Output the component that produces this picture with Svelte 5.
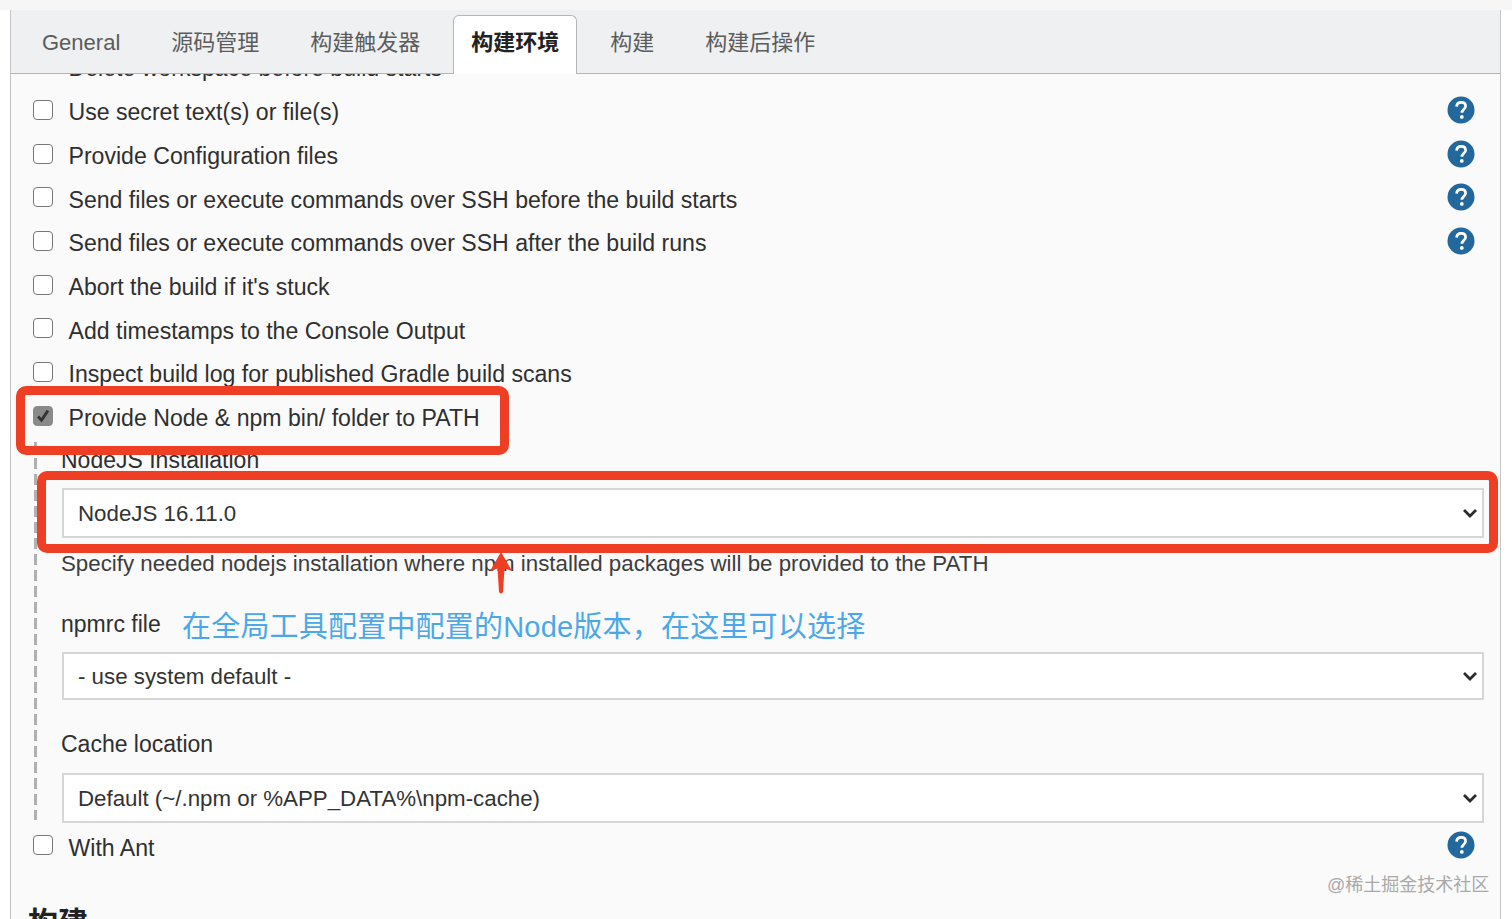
<script>
  const tabs = [
    { label: 'General' },
    { label: '源码管理' },
    { label: '构建触发器' },
    { label: '构建环境', active: true },
    { label: '构建' },
    { label: '构建后操作' }
  ];

  const rows = [
    { label: 'Use secret text(s) or file(s)', help: true },
    { label: 'Provide Configuration files', help: true },
    { label: 'Send files or execute commands over SSH before the build starts', help: true },
    { label: 'Send files or execute commands over SSH after the build runs', help: true },
    { label: "Abort the build if it's stuck" },
    { label: 'Add timestamps to the Console Output' },
    { label: 'Inspect build log for published Gradle build scans' }
  ];
</script>

{#snippet helpIcon()}
  <svg class="help" viewBox="0 0 28 28" aria-hidden="true">
    <circle cx="14" cy="14" r="13.5" fill="#22689c" />
    <path d="M9.6 10.6c.2-2.7 2-4.2 4.6-4.2 2.6 0 4.4 1.5 4.4 3.8 0 3.3-3.7 3.4-3.7 6.5" fill="none" stroke="#fff" stroke-width="2.7" />
    <circle cx="14.8" cy="20.9" r="1.9" fill="#fff" />
  </svg>
{/snippet}

{#snippet dropdown(value)}
  <div class="select">
    <select>
      <option>{value}</option>
    </select>
    <svg class="chevron" viewBox="0 0 16 10" aria-hidden="true">
      <path d="M2 2l6 6 6-6" fill="none" stroke="#2b2b2b" stroke-width="2.8" />
    </svg>
  </div>
{/snippet}

<div class="page">
  <div class="panel">
    <nav class="tabs">
      {#each tabs as tab}
        <button class="tab" class:active={tab.active}>{tab.label}</button>
      {/each}
    </nav>

    <div class="form">
      <div class="row clipped">
        <span class="box"></span>
        <span class="label">Delete workspace before build starts</span>
      </div>

      {#each rows as row}
        <div class="row">
          <span class="box"></span>
          <span class="label">{row.label}</span>
          {#if row.help}{@render helpIcon()}{/if}
        </div>
      {/each}

      <div class="row">
        <span class="box checked">
          <svg viewBox="0 0 20 20" aria-hidden="true">
            <path d="M4.5 10.5l3.8 4.2L15.5 4" fill="none" stroke="#333" stroke-width="3.2" />
          </svg>
        </span>
        <span class="label">Provide Node &amp; npm bin/ folder to PATH</span>
      </div>

      <div class="nested">
        <div class="field first">
          <div class="field-label">NodeJS Installation</div>
          {@render dropdown('NodeJS 16.11.0')}
          <div class="hint">Specify needed nodejs installation where npm installed packages will be provided to the PATH</div>
        </div>
        <div class="field second">
          <div class="field-label">npmrc file</div>
          {@render dropdown('- use system default -')}
        </div>
        <div class="field third">
          <div class="field-label">Cache location</div>
          {@render dropdown('Default (~/.npm or %APP_DATA%\\npm-cache)')}
        </div>
      </div>

      <div class="row">
        <span class="box"></span>
        <span class="label">With Ant</span>
        {@render helpIcon()}
      </div>

      <h2>构建</h2>
    </div>
  </div>

  <!-- annotations painted over the screenshot -->
  <div class="mark mark-check"></div>
  <div class="mark mark-select"></div>
  <svg class="arrow" viewBox="0 0 24 42" aria-hidden="true">
    <path d="M12 0L23 19 15.5 16.5 14 40Q12 43 10 40L8.5 16.5 1 19Z" fill="#ee3f24" />
  </svg>
  <div class="note">在全局工具配置中配置的Node版本，在这里可以选择</div>
  <div class="watermark">@稀土掘金技术社区</div>
</div>

<style>
  :global(body) {
    margin: 0;
    background: #fff;
  }

  .page {
    position: relative;
    height: 919px;
    overflow: hidden;
    box-sizing: border-box;
    padding: 10px 11px 0 10px;
    background: linear-gradient(#f6f6f6 10px, #fff 10px);
    font-family: 'Liberation Sans', 'Noto Sans CJK SC', sans-serif;
    color: #2f2f2f;
  }

  .panel {
    height: 100%;
    background: #fafafa;
    border-left: 1px solid #c4c4c4;
    border-right: 1px solid #c4c4c4;
    overflow: hidden;
    display: flex;
    flex-direction: column;
  }

  .tabs {
    position: relative;
    z-index: 2;
    flex: none;
    height: 64px;
    box-sizing: border-box;
    display: flex;
    align-items: flex-end;
    gap: 15px;
    padding-left: 13px;
    background: #eef0f2;
    border-bottom: 1px solid #b5b5b5;
  }

  .tab {
    height: 59px;
    margin-bottom: -1px;
    padding: 0 17px 4px;
    border: 1px solid transparent;
    border-bottom: none;
    border-radius: 6px 6px 0 0;
    background: none;
    font: 22px/30px 'Liberation Sans', 'Noto Sans CJK SC', sans-serif;
    color: #5c5c5c;
  }

  .tab.active {
    background: #fff;
    border-color: #b5b5b5;
    color: #222;
    font-weight: 700;
  }

  .form {
    flex: 1;
    padding: 0 15px 0 22px;
  }

  .row {
    display: flex;
    align-items: center;
    height: 43.7px;
    font-size: 23.1px;
  }

  .row.clipped {
    margin-top: -20px;
    height: 25px;
    align-items: flex-start;
    margin-bottom: 11px;
  }

  .label {
    margin-left: 15.5px;
    position: relative;
    top: 1px;
  }

  .box {
    flex: none;
    width: 18px;
    height: 18px;
    margin-top: -4px;
    border: 1.5px solid #777;
    border-radius: 4px;
    background: #fff;
  }

  .box.checked {
    background: #8a8a8a;
    border-color: #8a8a8a;
  }

  .box.checked svg {
    display: block;
    width: 100%;
    height: 100%;
  }

  .help {
    flex: none;
    width: 28px;
    height: 28px;
    margin-left: auto;
    margin-right: 10px;
    margin-top: -4px;
  }

  .nested {
    margin: 2px 0 6px 1px;
    padding-left: 27px;
    padding-right: 1px;
    background-image: repeating-linear-gradient(#b0b0b0 0 11px, transparent 11px 16px);
    background-size: 3px 100%;
    background-repeat: no-repeat;
    height: 378px;
    box-sizing: border-box;
  }

  .field-label {
    font-size: 23px;
    line-height: 26px;
  }

  .first {
    padding-top: 5px;
  }

  .second {
    padding-top: 34px;
  }

  .third {
    padding-top: 31px;
  }

  .select {
    position: relative;
    margin-left: 1px;
  }

  .first .select {
    margin-top: 15px;
  }

  .second .select {
    margin-top: 15px;
  }

  .third .select {
    margin-top: 16px;
  }

  select {
    display: block;
    width: 100%;
    height: 48px;
    box-sizing: border-box;
    padding: 2px 14px 0;
    appearance: none;
    border: 2px solid #d6d6d6;
    border-radius: 0;
    background: #fff;
    font: 22.3px 'Liberation Sans', sans-serif;
    color: #333;
  }

  .first select,
  .third select {
    height: 50px;
  }

  .chevron {
    position: absolute;
    right: 6px;
    top: 50%;
    width: 16px;
    height: 10px;
    margin-top: -5px;
  }

  .hint {
    margin-top: 13px;
    font-size: 22.3px;
    line-height: 26px;
    color: #3d3d3d;
  }

  h2 {
    margin: 36px 0 0 -5px;
    font-size: 30px;
    line-height: 36px;
    font-weight: 700;
    color: #222;
  }

  .mark {
    position: absolute;
    box-sizing: border-box;
    border: 9px solid #ee3f24;
    border-radius: 10px;
  }

  .mark-check {
    left: 16px;
    top: 386px;
    width: 493px;
    height: 69px;
  }

  .mark-select {
    left: 37px;
    top: 471px;
    width: 1461px;
    height: 82px;
  }

  .arrow {
    position: absolute;
    left: 489px;
    top: 552px;
    width: 24px;
    height: 42px;
  }

  .note {
    position: absolute;
    left: 182px;
    top: 609px;
    font-size: 29px;
    letter-spacing: 0.2px;
    line-height: 36px;
    color: #4aa8e8;
    white-space: nowrap;
  }

  .watermark {
    position: absolute;
    left: 1327px;
    top: 873px;
    font-size: 18px;
    line-height: 24px;
    color: #a9a9a9;
    white-space: nowrap;
  }
</style>
